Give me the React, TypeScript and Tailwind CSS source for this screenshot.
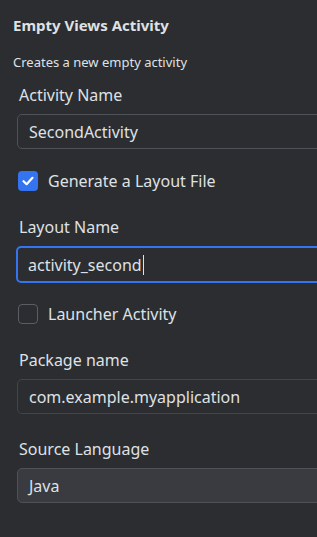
import React from 'react';

const font = { fontFamily: '"Segoe UI", "Noto Sans", sans-serif' };

const Checkbox: React.FC<{ checked: boolean; label: string }> = ({ checked, label }) => (
  <div className="flex items-center gap-[10px] pl-[18px]">
    {checked ? (
      <div className="flex h-[20px] w-[20px] items-center justify-center rounded-[4px] bg-[#3574f0]">
        <svg width="14" height="14" viewBox="0 0 14 14" fill="none">
          <path d="M2.5 7.2 L5.6 10.2 L11.5 3.8" stroke="white" strokeWidth="2.2" strokeLinecap="round" strokeLinejoin="round" />
        </svg>
      </div>
    ) : (
      <div className="h-[20px] w-[20px] rounded-[4px] border border-[#5a5d63]" />
    )}
    <span className="text-[16px] text-[#dfe1e5]">{label}</span>
  </div>
);

const Field: React.FC<{ value: string; variant?: 'normal' | 'focus' | 'disabled' | 'combo' }> = ({ value, variant = 'normal' }) => {
  const styles = {
    normal: 'h-[35px] border border-[#4e5157] bg-[#2b2d30] pl-[11px]',
    focus: 'h-[37px] border-2 border-[#3574f0] bg-[#2b2d30] pl-[10px]',
    disabled: 'h-[35px] border border-[#43454a] bg-[#2b2d30] pl-[11px] text-[#c9ccd1]',
    combo: 'h-[35px] border border-[#4e5157] bg-[#393b40] pl-[11px]',
  }[variant];
  return (
    <div className={`ml-[17px] flex w-[340px] shrink-0 items-center rounded-[5px] text-[16px] text-[#dfe1e5] ${styles}`}>
      <span>{value}</span>
      {variant === 'focus' && <span className="ml-px h-[20px] w-px bg-[#dfe1e5]" />}
    </div>
  );
};

export default function App() {
  return (
    <div className="h-[537px] w-[317px] overflow-hidden bg-[#2b2d30] text-[#dfe1e5]" style={font}>
      <div className="flex flex-col pt-[14px]">
        <h1 className="pl-[13px] text-[15px] font-bold leading-[22px]">Empty Views Activity</h1>
        <p className="mt-[17px] pl-[13px] text-[13px] leading-[18px]">Creates a new empty activity</p>

        <label className="mt-[13px] pl-[19px] text-[16px] leading-[22px]">Activity Name</label>
        <div className="mt-[8px]">
          <Field value="SecondActivity" />
        </div>

        <div className="mt-[20px]">
          <Checkbox checked label="Generate a Layout File" />
        </div>

        <label className="mt-[23px] pl-[19px] text-[16px] leading-[22px]">Layout Name</label>
        <div className="mt-[8px] -ml-px">
          <Field value="activity_second" variant="focus" />
        </div>

        <div className="mt-[19px]">
          <Checkbox checked={false} label="Launcher Activity" />
        </div>

        <label className="mt-[23px] pl-[19px] text-[16px] leading-[22px]">Package name</label>
        <div className="mt-[8px]">
          <Field value="com.example.myapplication" variant="disabled" />
        </div>

        <label className="mt-[24px] pl-[19px] text-[16px] leading-[22px]">Source Language</label>
        <div className="mt-[8px]">
          <Field value="Java" variant="combo" />
        </div>
      </div>
    </div>
  );
}
